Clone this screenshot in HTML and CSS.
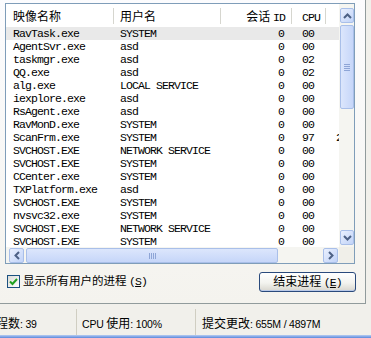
FILE: index.html
```html
<!DOCTYPE html>
<html lang="zh-CN">
<head>
    <meta charset="UTF-8">
    <title>Windows 任务管理器 - 进程</title>
    <link rel="stylesheet" href="styles.css">
</head>
<body>
    <div class="window">
        <div class="tabpage">
            <div class="listbox">
                <div class="list-main">
                    <div class="lv">
                        <div class="lv-head">
                            <div class="col c-name">映像名称</div>
                            <div class="col c-user">用户名</div>
                            <div class="col c-sess">会话 <span class="en">ID</span></div>
                            <div class="col c-cpu"><span class="en">CPU</span></div>
                            <div class="col c-mem"></div>
                        </div>
                        <div class="lv-body">
                            <div class="row sel"><div class="col c-name">RavTask.exe</div><div class="col c-user">SYSTEM</div><div class="col c-sess">0</div><div class="col c-cpu">00</div><div class="col c-mem"></div></div>
                            <div class="row"><div class="col c-name">AgentSvr.exe</div><div class="col c-user">asd</div><div class="col c-sess">0</div><div class="col c-cpu">00</div><div class="col c-mem"></div></div>
                            <div class="row"><div class="col c-name">taskmgr.exe</div><div class="col c-user">asd</div><div class="col c-sess">0</div><div class="col c-cpu">02</div><div class="col c-mem"></div></div>
                            <div class="row"><div class="col c-name">QQ.exe</div><div class="col c-user">asd</div><div class="col c-sess">0</div><div class="col c-cpu">02</div><div class="col c-mem"></div></div>
                            <div class="row"><div class="col c-name">alg.exe</div><div class="col c-user">LOCAL SERVICE</div><div class="col c-sess">0</div><div class="col c-cpu">00</div><div class="col c-mem"></div></div>
                            <div class="row"><div class="col c-name">iexplore.exe</div><div class="col c-user">asd</div><div class="col c-sess">0</div><div class="col c-cpu">00</div><div class="col c-mem"></div></div>
                            <div class="row"><div class="col c-name">RsAgent.exe</div><div class="col c-user">asd</div><div class="col c-sess">0</div><div class="col c-cpu">00</div><div class="col c-mem"></div></div>
                            <div class="row"><div class="col c-name">RavMonD.exe</div><div class="col c-user">SYSTEM</div><div class="col c-sess">0</div><div class="col c-cpu">00</div><div class="col c-mem"></div></div>
                            <div class="row"><div class="col c-name">ScanFrm.exe</div><div class="col c-user">SYSTEM</div><div class="col c-sess">0</div><div class="col c-cpu">97</div><div class="col c-mem">21,068 K</div></div>
                            <div class="row"><div class="col c-name">SVCHOST.EXE</div><div class="col c-user">NETWORK SERVICE</div><div class="col c-sess">0</div><div class="col c-cpu">00</div><div class="col c-mem"></div></div>
                            <div class="row"><div class="col c-name">SVCHOST.EXE</div><div class="col c-user">SYSTEM</div><div class="col c-sess">0</div><div class="col c-cpu">00</div><div class="col c-mem"></div></div>
                            <div class="row"><div class="col c-name">CCenter.exe</div><div class="col c-user">SYSTEM</div><div class="col c-sess">0</div><div class="col c-cpu">00</div><div class="col c-mem"></div></div>
                            <div class="row"><div class="col c-name">TXPlatform.exe</div><div class="col c-user">asd</div><div class="col c-sess">0</div><div class="col c-cpu">00</div><div class="col c-mem"></div></div>
                            <div class="row"><div class="col c-name">SVCHOST.EXE</div><div class="col c-user">SYSTEM</div><div class="col c-sess">0</div><div class="col c-cpu">00</div><div class="col c-mem"></div></div>
                            <div class="row"><div class="col c-name">nvsvc32.exe</div><div class="col c-user">SYSTEM</div><div class="col c-sess">0</div><div class="col c-cpu">00</div><div class="col c-mem"></div></div>
                            <div class="row"><div class="col c-name">SVCHOST.EXE</div><div class="col c-user">NETWORK SERVICE</div><div class="col c-sess">0</div><div class="col c-cpu">00</div><div class="col c-mem"></div></div>
                            <div class="row"><div class="col c-name">SVCHOST.EXE</div><div class="col c-user">SYSTEM</div><div class="col c-sess">0</div><div class="col c-cpu">00</div><div class="col c-mem"></div></div>
                        </div>
                    </div>

                    <!-- vertical scrollbar -->
                    <div class="vscroll">
                        <div class="sb-btn">
                            <svg width="9" height="6" viewBox="0 0 9 6"><path d="M1 5 L4.5 1.5 L8 5" fill="none" stroke="#4d6185" stroke-width="2"/></svg>
                        </div>
                        <div class="sb-thumb v-thumb">
                            <span class="grip-h"></span>
                            <span class="grip-h"></span>
                            <span class="grip-h"></span>
                            <span class="grip-h"></span>
                        </div>
                        <div class="sb-btn down">
                            <svg width="9" height="6" viewBox="0 0 9 6"><path d="M1 1 L4.5 4.5 L8 1" fill="none" stroke="#4d6185" stroke-width="2"/></svg>
                        </div>
                    </div>
                </div>

                <!-- horizontal scrollbar -->
                <div class="hscroll-row">
                    <div class="hscroll">
                        <div class="sb-btn">
                            <svg width="6" height="9" viewBox="0 0 6 9"><path d="M5 1 L1.5 4.5 L5 8" fill="none" stroke="#4d6185" stroke-width="2"/></svg>
                        </div>
                        <div class="sb-thumb h-thumb">
                            <span class="grip-v"></span>
                            <span class="grip-v"></span>
                            <span class="grip-v"></span>
                            <span class="grip-v"></span>
                        </div>
                        <div class="sb-btn right">
                            <svg width="6" height="9" viewBox="0 0 6 9"><path d="M1 1 L4.5 4.5 L1 8" fill="none" stroke="#4d6185" stroke-width="2"/></svg>
                        </div>
                    </div>
                    <div class="sb-corner"></div>
                </div>
            </div>

            <div class="options">
                <label class="check">
                    <span class="checkbox">
                        <svg width="11" height="11" viewBox="0 0 11 11"><path d="M2 5.5 L4.5 8 L9 3" fill="none" stroke="#21a121" stroke-width="2"/></svg>
                    </span>
                    <span class="check-text">显示所有用户的进程 <span class="en">(<u>S</u>)</span></span>
                </label>
                <button class="end-btn">结束进程 <span class="en">(<u>E</u>)</span></button>
            </div>
        </div>

        <div class="status">
            <div class="panels">
                <div class="panel p-count"><span class="zh">进程数</span>: 39</div>
                <div class="panel p-cpu">CPU <span class="zh">使用</span>: 100%</div>
                <div class="panel p-commit"><span class="zh">提交更改</span>: 655M / 4897M</div>
            </div>
            <div class="frame-bottom"></div>
        </div>
    </div>
</body>
</html>
```

FILE: styles.css
```css
/* General */
body {
    margin: 0;
    width: 371px;
    height: 338px;
    overflow: hidden;
    background-color: #f1f0eb;
    font-family: "Liberation Mono", "Noto Sans CJK SC", monospace;
    color: #000;
}

.window {
    display: flex;
    flex-direction: column;
    height: 338px;
}

/* Tab page */
.tabpage {
    box-sizing: border-box;
    width: 366px;
    height: 304px;
    padding: 3px 0 0 5px;
    border-right: 1px solid #919b9c;
    border-bottom: 1px solid #919b9c;
    background: linear-gradient(#fcfcfe, #f4f3ee);
    display: flex;
    flex-direction: column;
}

/* List view */
.listbox {
    width: 348px;
    border: 1px solid #7f9db9;
    background-color: #ffffff;
    display: flex;
    flex-direction: column;
}

.list-main {
    display: flex;
    height: 243px;
}

.lv {
    flex: 1;
    min-width: 0;
    overflow: hidden;
    display: flex;
    flex-direction: column;
}

.col {
    box-sizing: border-box;
    flex-shrink: 0;
    overflow: hidden;
    white-space: nowrap;
}

.c-name { width: 108px; padding-left: 7px; }
.c-user { width: 107px; padding-left: 6px; }
.c-sess { width: 71px; padding-right: 8px; text-align: right; }
.c-cpu { width: 34px; padding-left: 10px; }
.c-mem { width: 80px; padding-left: 10px; }

.lv-head {
    display: flex;
    align-items: flex-start;
    height: 23px;
    padding-top: 4px;
    box-sizing: border-box;
    font-family: "Noto Sans CJK SC", sans-serif;
    font-size: 12px;
    color: #000;
}

.lv-head .col {
    height: 16px;
    padding-top: 1px;
    line-height: 14px;
    border-right: 1px solid #d6d6cf;
}

.lv-head .c-sess { padding-right: 6px; }
.lv-head .c-mem { border-right: none; }

.en {
    font-family: "Liberation Mono", monospace;
    font-size: 11.5px;
    letter-spacing: -0.9px;
}

.lv-body {
    flex: 1;
    overflow: hidden;
}

.row {
    display: flex;
    height: 13px;
    line-height: 13px;
    font-size: 11.5px;
    letter-spacing: -0.9px;
}

.row.sel {
    background-color: #e9e9e9;
}

/* Scrollbars */
.vscroll {
    box-sizing: border-box;
    width: 15px;
    flex-shrink: 0;
    padding: 4px 0 2px 1px;
    background-color: #f5f5f1;
    display: flex;
    flex-direction: column;
}

.sb-btn {
    box-sizing: border-box;
    width: 15px;
    height: 15px;
    flex-shrink: 0;
    border: 1px solid #a9bfe9;
    border-radius: 2px;
    background: linear-gradient(135deg, #eaf0fe, #c1d3f8);
    display: flex;
    align-items: center;
    justify-content: center;
}

.vscroll .sb-btn {
    width: 14px;
}

.sb-btn.down {
    margin-top: auto;
}

.sb-thumb {
    box-sizing: border-box;
    border: 1px solid #a9bfe9;
    border-radius: 2px;
    display: flex;
    align-items: center;
    justify-content: center;
}

.v-thumb {
    width: 14px;
    height: 84px;
    margin-top: 2px;
    flex-direction: column;
    gap: 1px;
    background: linear-gradient(90deg, #dce6fc, #c6d6f9);
}

.grip-h {
    width: 6px;
    height: 1px;
    background-color: #8ea5d6;
}

.hscroll-row {
    display: flex;
    height: 16px;
}

.hscroll {
    flex: 1;
    display: flex;
    padding: 1px 0 0 3px;
    background-color: #f5f5f1;
}

.h-thumb {
    width: 252px;
    height: 15px;
    margin-left: 2px;
    gap: 1px;
    background: linear-gradient(#dce6fc, #c6d6f9);
}

.grip-v {
    width: 1px;
    height: 6px;
    background-color: #8ea5d6;
}

.sb-btn.right {
    margin-left: auto;
    margin-right: 1px;
}

.sb-corner {
    width: 15px;
    background-color: #f0efe9;
}

/* Options row */
.options {
    display: flex;
    justify-content: space-between;
    align-items: flex-start;
    width: 350px;
    padding-top: 8px;
}

.check {
    display: flex;
    align-items: center;
    gap: 3px;
    margin: 2px 0 0 2px;
}

.checkbox {
    box-sizing: border-box;
    width: 13px;
    height: 13px;
    border: 1px solid #1c5180;
    background: linear-gradient(135deg, #dcdcd7, #ffffff);
    display: flex;
    align-items: center;
    justify-content: center;
}

.check-text {
    font-family: "Noto Sans CJK SC", sans-serif;
    font-size: 11.5px;
    line-height: 13px;
}

.end-btn {
    width: 97px;
    height: 20px;
    margin-right: -1px;
    padding: 0;
    border: 1px solid #2a4a7c;
    border-radius: 3px;
    background: linear-gradient(#ffffff, #f3f3ef 55%, #d8d6ce);
    box-shadow: inset 0 -1px 0 #b9c9e8;
    font-family: "Noto Sans CJK SC", sans-serif;
    font-size: 12px;
    line-height: 16px;
    color: #000;
}

/* Status bar */
.status {
    flex: 1;
    display: flex;
    flex-direction: column;
    background-color: #f1f0eb;
}

.panels {
    flex: 1;
    display: flex;
    padding-top: 5px;
    font-family: "Liberation Sans", sans-serif;
    font-size: 10.5px;
    letter-spacing: -0.2px;
}

.panel {
    box-sizing: border-box;
    padding-top: 5px;
    line-height: 17px;
    white-space: nowrap;
    overflow: hidden;
}

.zh {
    font-family: "Noto Sans CJK SC", sans-serif;
    font-size: 12px;
    letter-spacing: 0;
}

.p-count {
    width: 93px;
    margin-left: -16px;
    border-right: 1px solid #d0cec2;
}

.p-cpu {
    width: 119px;
    padding-left: 5px;
    border-right: 1px solid #d0cec2;
}

.p-commit {
    flex: 1;
    padding-left: 6px;
}

.frame-bottom {
    height: 3px;
    background: linear-gradient(#b8cdf2, #5a88dc);
}
```
